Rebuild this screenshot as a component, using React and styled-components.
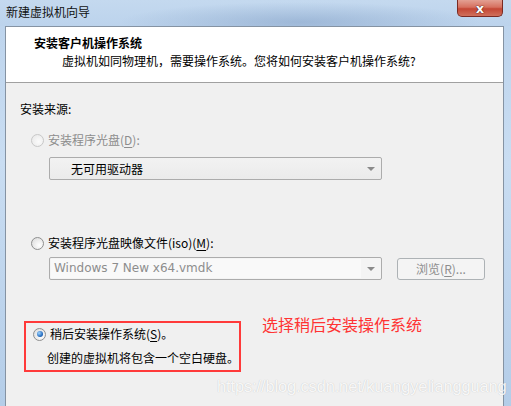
import React from 'react'
import styled, { createGlobalStyle } from 'styled-components'

const Global = createGlobalStyle`
    html, body {
        margin: 0;
        padding: 0;
        overflow: hidden;
    }
    body {
        font-family: "Noto Sans CJK SC", "DejaVu Sans", sans-serif;
        font-size: 12px;
        color: #000;
    }
`

const Frame = styled.div`
    width: 511px;
    height: 406px;
    display: flex;
    flex-direction: column;
    position: relative;
    background: linear-gradient(180deg, #bcd3ec 0%, #c9ddf2 40%, #b4cde8 100%);
    overflow: hidden;
`

const TitleBar = styled.div`
    height: 26px;
    display: flex;
    justify-content: space-between;
    align-items: flex-start;
    padding-left: 6px;
    background: radial-gradient(ellipse 180px 20px at 300px 22px, rgba(120,150,190,0.45), transparent),
        linear-gradient(180deg, #c4d9ef, #bcd3ec);
    span {
        line-height: 24px;
        color: #111;
        font-size: 12px;
    }
`

const CloseButton = styled.div`
    width: 46px;
    height: 17px;
    margin-right: 8px;
    box-sizing: border-box;
    border: 1px solid #7a2a23;
    border-top: none;
    border-radius: 0 0 5px 5px;
    background: linear-gradient(180deg, #e3a093 0%, #d6705f 45%, #c44634 55%, #d0705c 100%);
    display: flex;
    align-items: center;
    justify-content: center;
    color: #fff;
    font-family: "DejaVu Sans", sans-serif;
    font-weight: bold;
    font-size: 13px;
    text-shadow: 0 0 1px #3a0d08, 0 0 1px #3a0d08;
`

const Client = styled.div`
    flex: 1;
    margin: 0 7px 0 5px;
    border: 1px solid #8593a3;
    border-bottom: none;
    background: #f0f0f0;
    display: flex;
    flex-direction: column;
`

const Header = styled.div`
    height: 56px;
    background: #fff;
    border-bottom: 1px solid #a0a0a0;
    padding: 7px 0 0 28px;
    box-sizing: border-box;
    h1 {
        margin: 0;
        font-size: 12px;
        font-weight: bold;
        line-height: 18px;
    }
    p {
        margin: 0 0 0 28px;
        line-height: 18px;
    }
`

const Body = styled.div`
    padding: 17px 0 0 14px;
    display: flex;
    flex-direction: column;
`

const SectionLabel = styled.div`
    line-height: 18px;
`

const RadioRow = styled.div`
    display: flex;
    align-items: center;
    gap: 4px;
    margin-left: ${p => p.$indent ?? 11}px;
    margin-top: ${p => p.$top}px;
    line-height: 18px;
    color: ${p => (p.$disabled ? '#8d8d8d' : '#000')};
`

const Radio = styled.span`
    width: 11px;
    height: 11px;
    border-radius: 50%;
    border: 1px solid ${p => (p.$disabled ? '#c8c8c8' : '#8e8f8f')};
    background: ${p => (p.$disabled
        ? 'radial-gradient(circle at 60% 60%, #fbfbfb, #e6e6e6)'
        : 'radial-gradient(circle at 65% 65%, #ffffff, #d8d8d8)')};
    display: flex;
    align-items: center;
    justify-content: center;
    flex-shrink: 0;
    &::after {
        content: '';
        display: ${p => (p.$checked ? 'block' : 'none')};
        width: 6px;
        height: 6px;
        border-radius: 50%;
        background: radial-gradient(circle at 35% 35%, #9fd4ff, #1a62b8 70%, #0d3f80);
    }
`

const Key = styled.u`
    text-underline-offset: 2px;
`

const FieldRow = styled.div`
    display: flex;
    align-items: center;
    gap: 15px;
    margin: ${p => p.$top}px 0 0 29px;
`

const Combo = styled.div`
    width: 333px;
    height: 23px;
    box-sizing: border-box;
    border: 1px solid #acacac;
    border-radius: 2px;
    background: ${p => (p.$disabled ? '#f4f4f4' : 'linear-gradient(180deg, #f2f2f2, #ebebeb)')};
    display: flex;
    align-items: center;
    padding: ${p => (p.$disabled ? '0 0 0 1px' : '0 0 0 21px')};
    position: relative;
    color: ${p => (p.$disabled ? '#8d8d8d' : '#000')};
    font-family: ${p => (p.$disabled ? '"DejaVu Sans", "Noto Sans CJK SC", sans-serif' : 'inherit')};
    font-size: 12px;
`

const ComboText = styled.span`
    flex: 1;
    line-height: 19px;
    height: 19px;
    padding-left: 3px;
    background: ${p => (p.$field ? '#f9f9f9' : 'transparent')};
    margin-right: 20px;
`

const Arrow = styled.span`
    position: absolute;
    right: 6px;
    top: 9px;
    width: 0;
    height: 0;
    border-left: 4px solid transparent;
    border-right: 4px solid transparent;
    border-top: 4px solid #8a8a8a;
`

const Button = styled.div`
    width: 88px;
    height: 22px;
    box-sizing: border-box;
    border: 1px solid #adb2b5;
    border-radius: 3px;
    background: #f4f4f4;
    color: #8d8d8d;
    display: flex;
    align-items: center;
    justify-content: center;
`

const AnnotateRow = styled.div`
    display: flex;
    align-items: flex-start;
    margin-top: 41px;
    margin-left: 4px;
`

const HighlightBox = styled.div`
    width: 217px;
    height: 51px;
    box-sizing: border-box;
    border: 2px solid #ff3a3a;
    padding: 2px 0 0 7px;
    p {
        margin: 6px 0 0 14px;
        line-height: 18px;
    }
`

const Note = styled.div`
    margin: -7px 0 0 21px;
    color: #ff3333;
    font-size: 16px;
    line-height: 20px;
`

const Watermark = styled.div`
    position: absolute;
    left: 217px;
    top: 377px;
    white-space: nowrap;
    font-family: "Liberation Sans", Arial, sans-serif;
    font-size: 16.4px;
    color: rgba(255, 255, 255, 0.9);
    text-shadow: 0 0 1px rgba(0, 0, 0, 0.22);
    letter-spacing: -0.1px;
    pointer-events: none;
`

const App = () => {
    return (
        <Frame>
            <Global />
            <TitleBar>
                <span>新建虚拟机向导</span>
                <CloseButton>x</CloseButton>
            </TitleBar>
            <Client>
                <Header>
                    <h1>安装客户机操作系统</h1>
                    <p>虚拟机如同物理机，需要操作系统。您将如何安装客户机操作系统?</p>
                </Header>
                <Body>
                    <SectionLabel>安装来源:</SectionLabel>
                    <RadioRow $top={13} $disabled>
                        <Radio $disabled />
                        <span>安装程序光盘(<Key>D</Key>):</span>
                    </RadioRow>
                    <FieldRow $top={8}>
                        <Combo>
                            <span>无可用驱动器</span>
                            <Arrow />
                        </Combo>
                    </FieldRow>
                    <RadioRow $top={54}>
                        <Radio />
                        <span>安装程序光盘映像文件(iso)(<Key>M</Key>):</span>
                    </RadioRow>
                    <FieldRow $top={5}>
                        <Combo $disabled>
                            <ComboText $field>Windows 7 New x64.vmdk</ComboText>
                            <Arrow />
                        </Combo>
                        <Button>浏览(<Key>R</Key>)...</Button>
                    </FieldRow>
                    <AnnotateRow>
                        <HighlightBox>
                            <RadioRow $indent={0} $top={0}>
                                <Radio $checked />
                                <span>稍后安装操作系统(<Key>S</Key>)。</span>
                            </RadioRow>
                            <p>创建的虚拟机将包含一个空白硬盘。</p>
                        </HighlightBox>
                        <Note>选择稍后安装操作系统</Note>
                    </AnnotateRow>
                </Body>
            </Client>
            <Watermark>https://blog.csdn.net/kuangyeliangguang</Watermark>
        </Frame>
    )
}

export default App
